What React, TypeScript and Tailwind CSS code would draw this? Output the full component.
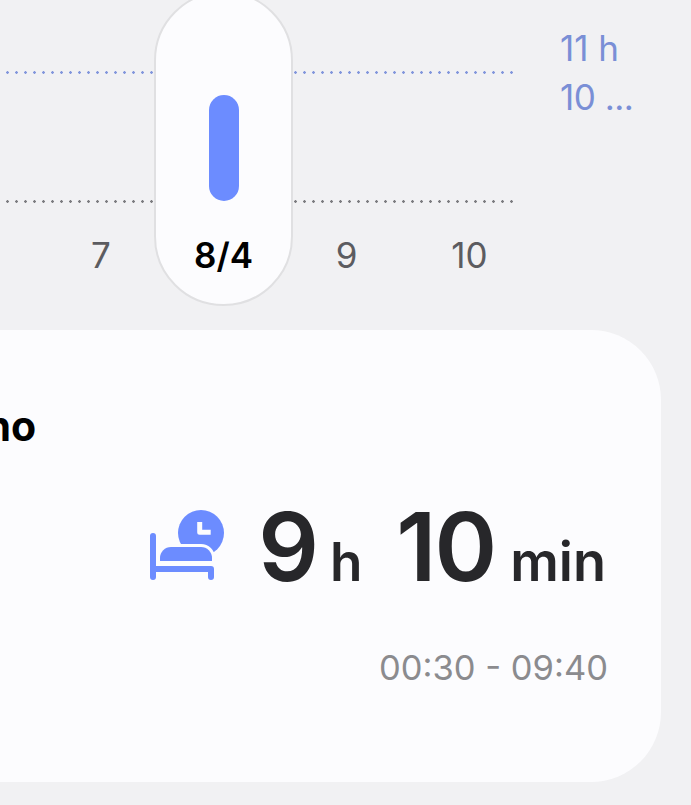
import React from "react";

const FONT = "font-['Inter','Noto_Sans',sans-serif]";

function BedClockIcon() {
  const mattress = "M11 53v-3a11 11 0 0 1 11-11h30a11 11 0 0 1 11 11v3z";
  return (
    <svg width="78" height="74" viewBox="0 0 78 74" fill="none">
      <circle cx="52" cy="25" r="23" fill="#6c8cff" />
      <path d="M50.7 14v10.3h11" stroke="#fcfcfe" strokeWidth="5" strokeLinejoin="round" />
      <path d={mattress} stroke="#fcfcfe" strokeWidth="6" />
      <path d={mattress} fill="#6c8cff" />
      <path d="M4 28v41M4 61h58v8" stroke="#6c8cff" strokeWidth="6" strokeLinecap="round" strokeLinejoin="round" />
    </svg>
  );
}

function Chart() {
  const days = [
    { label: "7", active: false },
    { label: "8/4", active: true },
    { label: "9", active: false },
    { label: "10", active: false },
  ];
  return (
    <section className="relative flex h-[330px] shrink-0">
      <div className="w-[514px] shrink-0 pt-[71px]">
        <div className="h-[3px] bg-[radial-gradient(circle,#8296dc_1.2px,transparent_1.5px)] bg-[length:9px_3px] bg-[position:3px_0]" />
        <div className="mt-[126px] h-[3px] bg-[radial-gradient(circle,#7c7c80_1.2px,transparent_1.5px)] bg-[length:9px_3px] bg-[position:3px_0]" />
        <div className="mt-[30px] ml-[40px] grid grid-cols-[122px_123px_123px_123px] text-center text-[35px] leading-[44px] text-[#5c5c60]">
          {days.map((day) => (
            <span
              key={day.label}
              className={day.active ? "relative z-10 text-[35px] font-semibold text-black" : ""}
            >
              {day.label}
            </span>
          ))}
        </div>
      </div>
      <div className="pl-[46px] pt-[24px] text-[35px] leading-[49px] text-[#7a8fd6]">
        <div>11 h</div>
        <div className="tracking-[-0.5px]">10 ...</div>
      </div>

      {/* selected day */}
      <div className="absolute left-[154px] top-[-9px] h-[315px] w-[139px] rounded-full border-2 border-[#e0e0e2] bg-[#fcfcfe]">
        <div className="absolute left-[53px] top-[102px] h-[106px] w-[30px] rounded-full bg-[#6c8cff]" />
      </div>
    </section>
  );
}

function SleepCard() {
  return (
    <section className="ml-[-100px] mr-[30px] h-[452px] shrink-0 rounded-[70px] bg-[#fcfcfe] pr-[55px] pt-[71px]">
      <h2 className="text-[41px] font-bold leading-[50px] text-black">
        <span className="ml-[8px]">Sonno</span>
      </h2>
      <div className="mt-[48px] flex items-end justify-end font-semibold text-[#27272a]">
        <div className="mb-[28px] mr-[31px]">
          <BedClockIcon />
        </div>
        <div className="flex items-baseline leading-[96px]">
          <span className="text-[95px] tracking-[-2px]">9</span>
          <span className="ml-[13px] text-[53px]">h</span>
          <span className="ml-[34px] text-[95px] tracking-[-2px]">10</span>
          <span className="ml-[15px] text-[54px]">min</span>
        </div>
      </div>
      <p className="mr-[-2px] mt-[36px] text-right text-[34.5px] leading-[44px] text-[#8b8b8e]">00:30 - 09:40</p>
    </section>
  );
}

export default function App() {
  return (
    <div className={`flex h-[805px] w-[691px] flex-col overflow-hidden bg-[#f1f1f3] ${FONT}`}>
      <Chart />
      <SleepCard />
    </div>
  );
}
